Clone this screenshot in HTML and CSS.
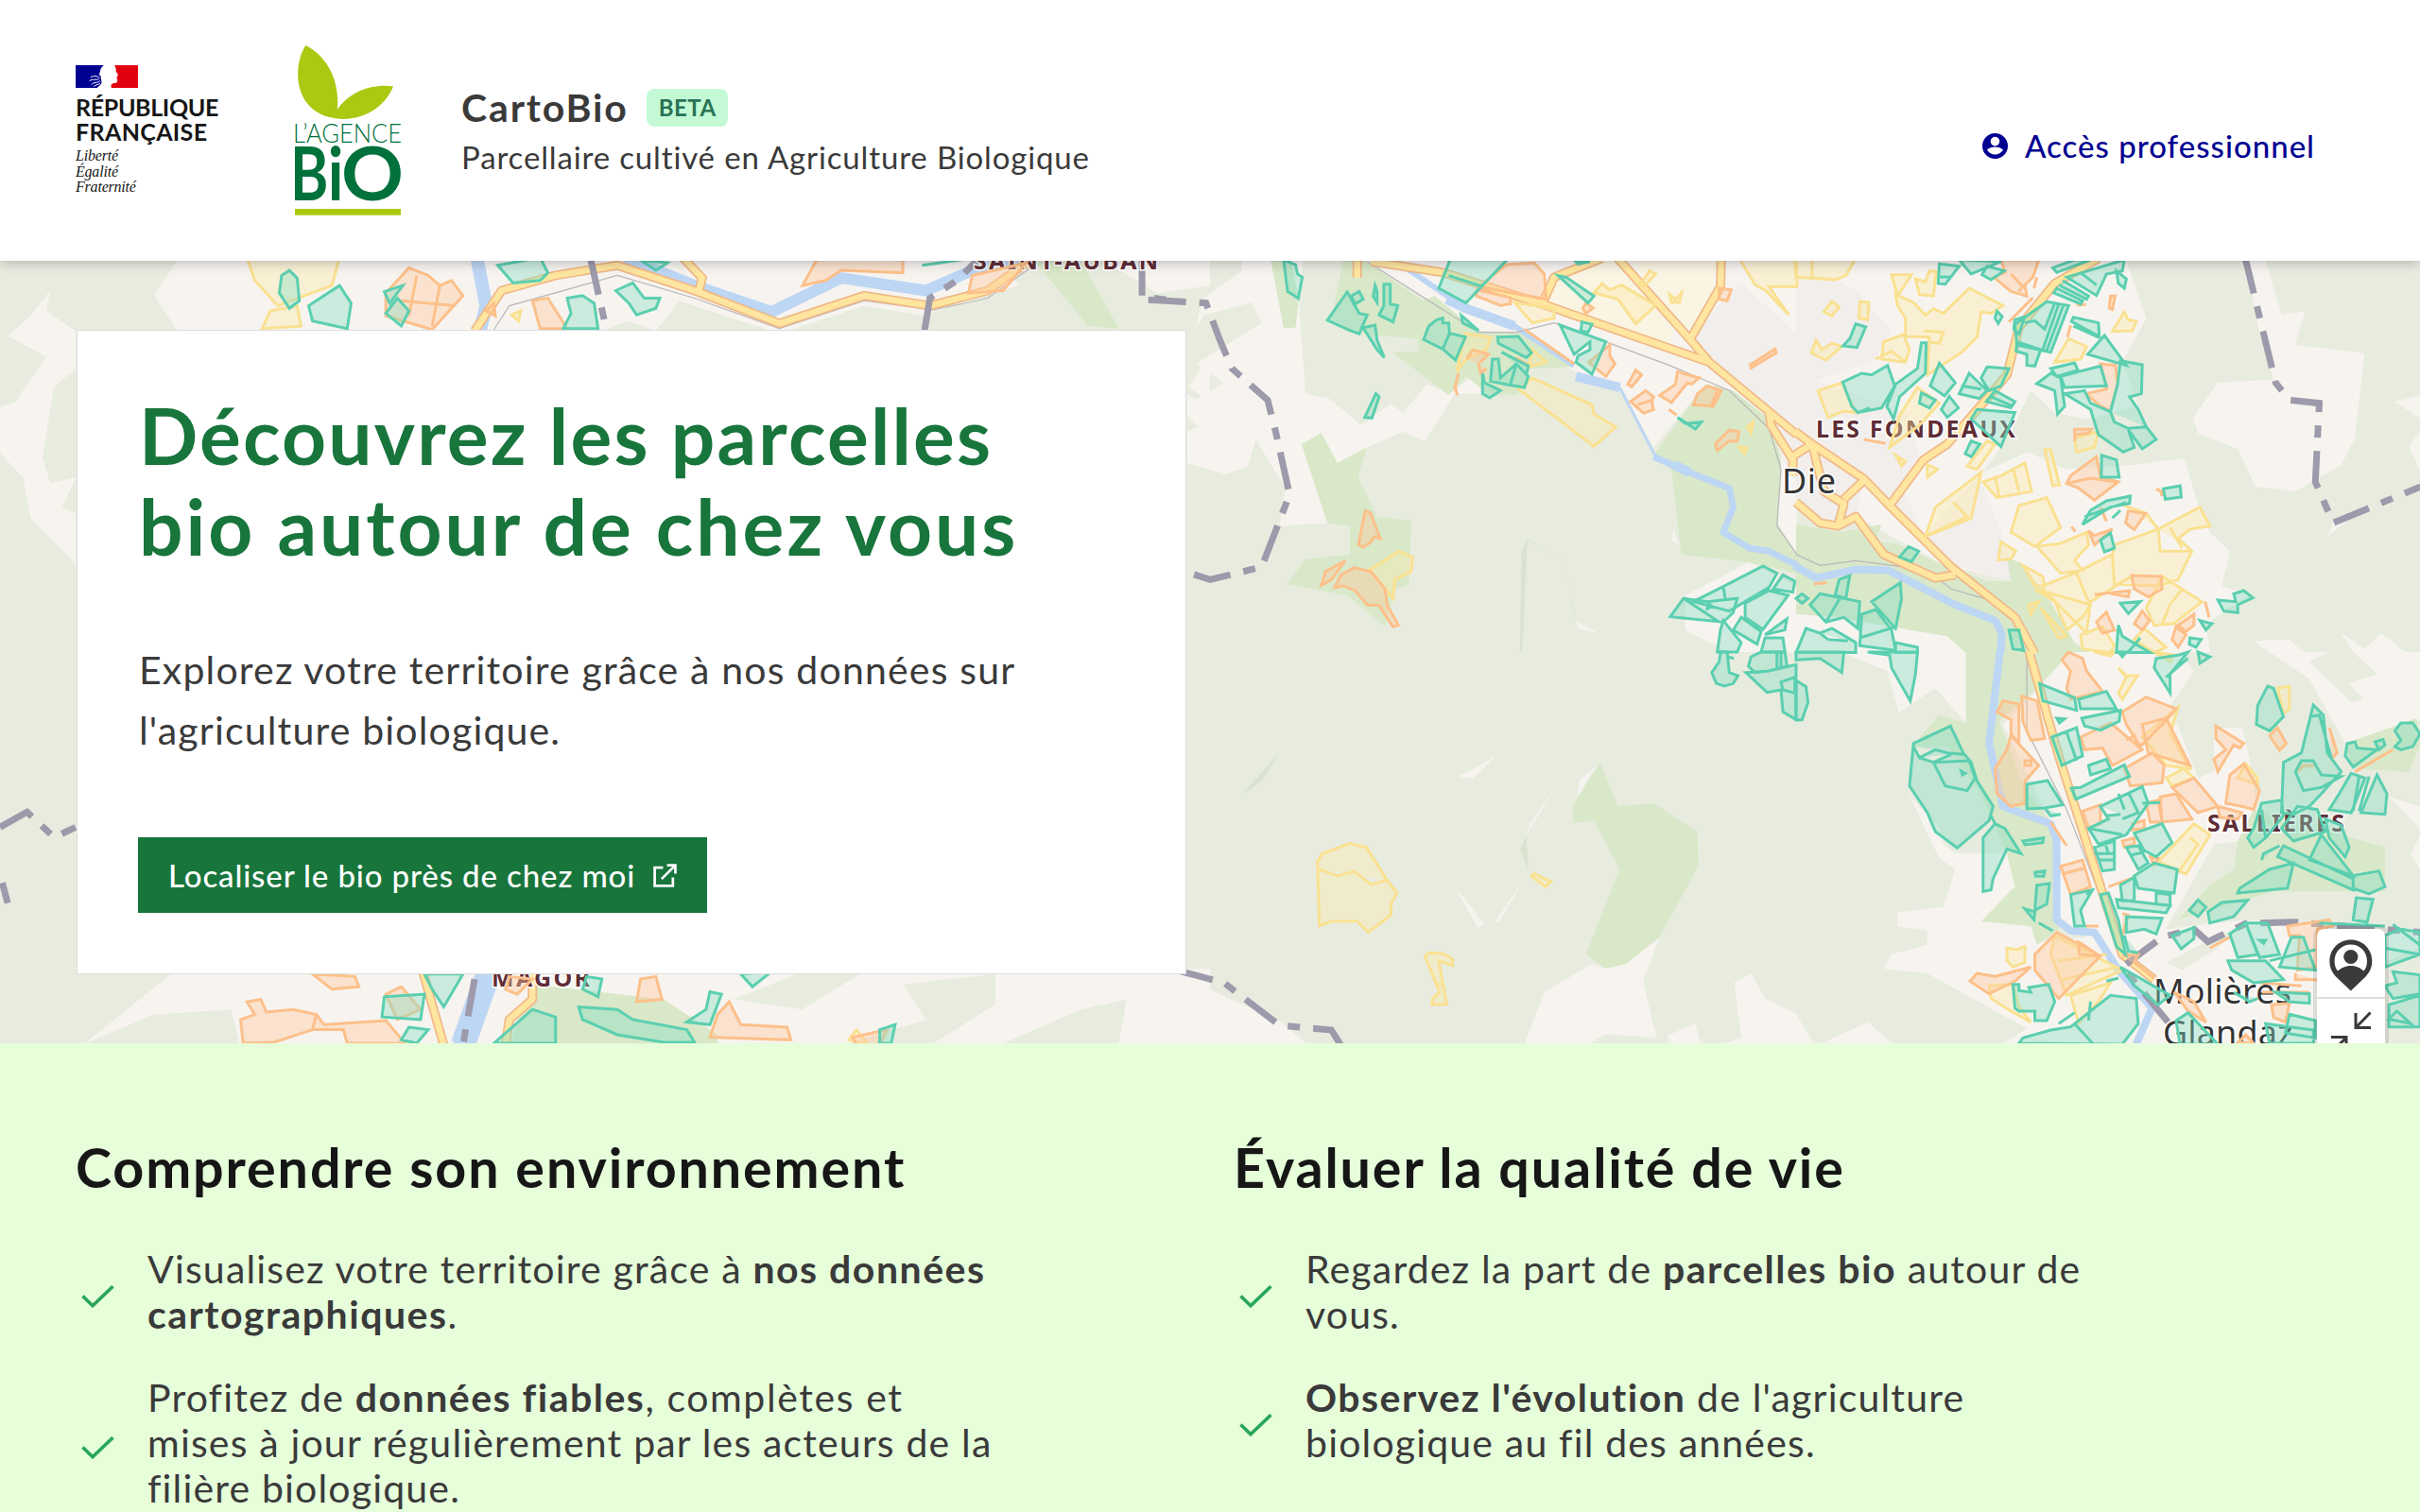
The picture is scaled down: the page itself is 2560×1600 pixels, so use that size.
FILE: index.html
```html
<!DOCTYPE html>
<html lang="fr">
<head>
<meta charset="utf-8">
<title>CartoBio</title>
<link rel="stylesheet" href="styles.css">
</head>
<body>
<header class="header">
  <div class="rf">
    <svg class="rf-flag" viewBox="60 120 198 72" aria-hidden="true">
      <path fill="#000091" d="M60 120H149C143 126 138 132 138 140L134 151L140 154C138 160 144 168 142 178C139 184 133 187 128 192H60Z"/>
      <path fill="#e1000f" d="M183 120H258V192H174C170 184 174 177 183 177C190 178 194 173 192 166L190 160L195 150L188 140C189 132 187 126 183 120Z"/>
      <path fill="none" stroke="#fff" stroke-width="3" d="M108 158C118 152 128 154 136 160M104 170C114 162 124 168 134 164M110 182C118 172 128 178 138 170M118 188C126 180 132 182 138 178"/>
    </svg>
    <p class="rf-name"><span>RÉPUBLIQUE</span><br><span class="rf-wide">FRANÇAISE</span></p>
    <p class="rf-motto">Liberté<br>Égalité<br>Fraternité</p>
  </div>
  <svg class="agence" viewBox="756 54 336 540" role="img" aria-label="L'Agence Bio">
    <path fill="#abc911" d="M790 54C750 115 745 265 885 286C975 298 1045 245 1068 184C1000 175 930 200 890 258C900 180 865 90 790 54Z"/>
    <text class="agence-top" x="750" y="363" textLength="345" lengthAdjust="spacingAndGlyphs">L’AGENCE</text>
    <text class="agence-bio" x="740" y="547" textLength="122" lengthAdjust="spacingAndGlyphs">B</text>
    <text class="agence-bio" x="860" y="547" textLength="50" lengthAdjust="spacingAndGlyphs">i</text>
    <text class="agence-bio" x="903" y="547" textLength="198" lengthAdjust="spacingAndGlyphs">O</text>
    <path fill="#abc911" d="M756 573H1092V593H756Z"/>
  </svg>
  <div class="service">
    <p class="service-title"><span class="name">CartoBio</span><span class="badge">BETA</span></p>
    <p class="service-tag">Parcellaire cultivé en Agriculture Biologique</p>
  </div>
  <a class="login">
    <svg viewBox="0 0 27 27" aria-hidden="true"><path fill="#000091" fill-rule="evenodd" d="M13.5 0a13.5 13.5 0 1 1 0 27a13.5 13.5 0 0 1 0-27ZM13.5 3.8a4.8 4.8 0 1 0 0 9.6a4.8 4.8 0 0 0 0-9.6ZM5 17.5C7 20.8 10 22.6 13.5 22.6S20 20.8 22 17.5C20 15.8 17 14.6 13.5 14.6S7 15.8 5 17.5Z"/></svg>
    <span>Accès professionnel</span>
  </a>
</header>

<section class="hero">
  <svg class="map" viewBox="0 276 2560 828" preserveAspectRatio="none" aria-hidden="true">
    <!-- land cover -->
    <g transform="translate(0 270) scale(.8163 .5357)">
      <path class="land" d="M65 70L40 120 10 160 60 200 20 290 0 300V390L30 440 40 520 98 610V510L80 500 98 440 65 450 55 400 70 260 98 225V150L60 110ZM230 10H1000L1300 10 1320 60 1195 120 1030 150H850L815 130 780 150H230L200 80ZM230 1410L110 1557H1568V1410ZM1430 10H1568V60L1500 75ZM1568 200L1540 260 1568 290Z"/>
      <path class="wood" d="M200 1500L300 1490 310 1557H110ZM1000 1440L950 1470 1040 1490 1120 1415H1040ZM1290 1480L1210 1557H1100L1200 1510 1170 1440 1290 1420ZM1400 1490L1460 1470 1450 1557H1300ZM880 90L1000 150H850ZM1020 150L1120 100 1200 120 1190 150Z"/>
      <path class="grass" d="M1340 10H1400L1450 145 1410 140ZM690 1440L860 1470 930 1540V1557H660Z"/>
    </g>
    <g transform="translate(1240 270) scale(.4209 .3333)">
      <path class="land" d="M175 18H430V80L320 140 335 440 395 455 475 540 550 470 580 500 640 410 700 440 770 370 870 440 710 440 635 590 580 560 490 610 415 660 375 565 325 600 390 850 270 860 285 740 210 585 190 670 135 695 38 660V560L65 545 38 510V440L60 460 130 405 60 345 225 215 200 150 80 190 60 230 75 140 175 50ZM485 18H1570V960L1520 850 1530 640 1480 540 1410 430 1340 410 1210 610 1125 420 1010 370 870 245 770 240ZM1260 870L1275 920 1255 905ZM1450 975L1570 1050V1260H1400L1290 1190 1290 1080ZM1015 1160L1070 1200 1020 1185Z"/>
      <path class="wood" d="M330 18H430V200L390 205 440 245 520 255 615 265V305L555 310 640 410 580 500 550 470 475 540 395 455 335 440 318 140Z"/>
      <path class="town" d="M1430 90L1570 250V720L1530 640 1500 520 1350 350 1300 270 1380 150Z"/>
      <path class="farm" d="M1050 18H1120L1260 240 1250 280 1080 210 940 150 960 70ZM1150 18H1370L1350 150 1300 240Z"/>
      <path class="grass" d="M248 18H300L318 140 310 230 280 232ZM430 18H485L630 145 660 130 770 245 870 245 1010 355 900 360 870 440 800 450 740 385 695 445 555 310 620 305 615 265 520 255 440 245 400 200ZM325 600L375 565 415 660 490 610 467 705 515 830 600 842 595 1045 560 1060 535 1178 440 1080 288 1045 335 965 447 950V860L390 850ZM1340 410L1410 430 1500 520 1530 640V690L1520 850 1570 950V1010L1450 975 1280 950 1255 680 1210 635Z"/>
      <path class="shade" d="M893 900L880 1260H874L878 940ZM893 900L975 965 985 970 900 910ZM990 990L1012 1150 1016 1160 996 1040Z"/>
    </g>
    <g transform="translate(1900 270) scale(.4209 .3333)">
      <path class="land" d="M0 18H830L880 200 820 340 860 480 730 520 650 500 590 430 540 560 470 690 580 625 680 680 850 665 975 645 1010 790 1040 880 1090 940 1070 1050 1140 1080 1030 1170 1040 1260H660L610 1100 560 970 490 1020 430 1000 380 990 150 830 0 780ZM1130 18H1180L1220 190 1280 178 1253 285 1428 312 1405 580 1370 665 1255 750 1155 735 1110 615 1010 565 998 515 1060 405 1200 395 1165 250ZM1505 465L1570 445V520ZM1540 605L1570 560V690ZM1150 1225L1240 1220 1275 1260H1190ZM1370 1200L1430 1250 1470 1200 1530 1260H1400ZM1350 850L1390 840 1335 893Z"/>
      <path class="town" d="M0 60L90 70 150 110 240 240 200 330 50 400 280 500 310 640 270 740 320 890 460 700 540 960V1035L490 1020 390 980 280 850 170 715 0 560ZM0 560L170 715 150 830 105 870 0 780Z"/>
      <path class="grass" d="M0 855L110 880 215 855 200 910 250 915 380 990 430 1010 480 1035 540 1035 530 960 570 980 640 1100 700 1230 740 1262H420L380 1210 200 1190 100 1150 0 1140Z"/>
      <path class="land" d="M0 1140L100 1150 380 1210 425 1262H0Z"/>
    </g>
    <g transform="translate(1240 690) scale(.4209 .3333)">
      <path class="land" d="M0 1020L270 1170 335 1242H0ZM885 1245L935 1080 1055 990 1090 1005 1140 990 1225 905 1183 1045 1217 1225 1090 1212 1045 1245ZM1245 1218L1315 1180 1328 1245H1250ZM1413 1050L1455 1020 1490 1100 1570 1150V1245H1380L1430 1225ZM720 395L815 330 755 402ZM1025 405L1065 362 1018 460ZM965 425L890 580 900 545ZM710 745L785 865 768 875ZM888 715L810 860 822 855Z"/>
      <path class="grass" d="M1075 350L1120 490 1210 480 1320 570 1322 680 1225 905 1140 990 1090 1005 1040 960 1125 690 1060 535 1010 542 1007 490Z"/>
      <path class="shade" d="M890 585L896 692 874 625ZM173 455L270 318 225 410Z"/>
    </g>
    <g transform="translate(1900 690) scale(.4209 .3333)">
      <path class="land" d="M110 0H427V225L350 115 258 192 230 60ZM600 130L690 0H960L1000 60 940 170 1010 400 1050 380V240H1120L1140 340 1160 520 1110 600 1050 610 1000 720 930 880 1130 850 1570 890V1245H850L720 880 660 860 650 600 640 540 520 230ZM285 455L360 560 370 610 400 640 530 640 550 745 465 855 590 870 610 920 770 900 860 1050 890 1140 850 1245H520L580 1195 330 1020 220 1005 240 960 330 930V885L255 870V825L370 810 400 690 360 655ZM1190 0H1340L1395 160 1425 150 1390 100 1460 70 1400 0H1570V215L1380 290 1290 85ZM1490 460L1570 490V580L1545 640 1568 690V560ZM60 1245L180 1175 245 1245ZM0 1150L45 1245H0Z"/>
      <path class="wood" d="M930 985L1060 900 1100 880 1060 940 970 1010ZM1340 0H1400L1460 70 1390 100 1420 150 1395 160 1290 30ZM1480 980L1570 940V1242H1480Z"/>
      <path class="grass" d="M427 0H690L600 120 510 220 570 420 640 540 660 600V880L605 930 590 870 465 855 550 745 530 640 460 440 380 300H290L360 200 427 225ZM1380 290L1560 210 1570 290 1540 380 1400 370ZM1150 500L1480 620V760H1200L960 850 1040 740 1100 690 1110 600Z"/>
    </g>
    <!-- water -->
    <g class="water">
      <g transform="translate(0 270) scale(.8163 .5357)">
        <path class="w14" d="M618 5L630 100 622 150M630 1410L595 1560"/><path class="w24" d="M635 1410L600 1560"/>
        <path class="w12" d="M810 5L900 60 1000 112 1090 45 1200 70 1260 30 1330 5"/>
      </g>
      <g transform="translate(1240 270) scale(.4209 .3333)">
        <path class="w6" d="M570 25L680 120 740 170 860 225 1010 350"/><path class="w10" d="M690 140L740 170 860 225"/>
        <path class="w10" d="M1015 385L1125 420M1260 665L1300 690"/>
        <path class="w4" d="M1125 420L1215 640"/>
        <path class="w7" d="M1210 640L1300 690 1400 740 1410 800 1385 880 1450 930 1500 940 1572 985"/>
      </g>
      <path class="w9" transform="translate(1900 270) scale(.4209 .3333)" d="M-5 985L50 1025 150 998 230 1000 400 1110 500 1160 517 1200 514 1262"/>
      <path class="w9" transform="translate(1900 690) scale(.4209 .3333)" d="M513 -5L485 290 520 490 640 545 655 600V850L690 885 750 890 810 1010 895 1130 855 1245"/>
    </g>
    <!-- railways -->
    <g class="rail">
      <path transform="translate(1240 270) scale(.4209 .3333)" d="M490 20L770 245H865L960 215 1250 350 1400 430 1500 550 1530 680 1520 860 1570 950"/>
      <path transform="translate(1900 270) scale(.4209 .3333)" d="M0 950L60 985 150 970 330 1000 390 1060 500 1100"/>
      <path transform="translate(1900 690) scale(.4209 .3333)" d="M580 0V250L680 500 760 760"/>
      <path transform="translate(0 270) scale(.8163 .5357)" d="M640 147L660 100 800 40 900 85 1010 145 1120 90 1210 108 1280 85 1340 20"/>
    </g>
    <!-- roads: casing, then surface -->
    <g class="casing">
      <path id="r1" transform="translate(1240 270) scale(.4209 .3333)" d="M500 20L680 55 930 155 1350 340 1570 570M1120 10L1300 265 1350 340M1380 10L1378 100 1305 260M930 155L960 70 1080 10M465 10V72M1500 500L1505 540 1560 650V700"/>
      <path id="r2" transform="translate(1900 270) scale(.4209 .3333)" d="M-2 560L40 600 170 710 235 795 390 990 420 1020 550 1150 600 1265M235 795L320 650 380 600 490 440 530 380 560 230 650 90 760 10M40 600L70 750 120 790 105 860 60 850 0 785M170 715L120 775M105 860L150 830 220 950 350 1025 400 1015M40 600L-10 640"/>
      <path id="r3" transform="translate(1900 690) scale(.4209 .3333)" d="M585 -5L660 330 820 960 900 1040"/>
      <path id="r4" transform="translate(0 270) scale(.8163 .5357)" d="M615 150L650 70 720 40 800 20 900 70 1010 135 1120 80 1205 100 1280 70 1340 5M905 75L910 45 885 5M546 1405L575 1560M690 1405V1470L660 1510 655 1560"/>
    </g>
    <g class="road"><use href="#r1"/><use href="#r2"/><use href="#r3"/><use href="#r4"/></g>
    <!-- municipal boundaries -->
    <g class="border">
      <path transform="translate(1240 270) scale(.4209 .3333)" d="M-60 142L85 152 120 270 150 360 240 460 260 560 295 760 225 990 95 1030 20 1000"/>
      <path transform="translate(1900 270) scale(.4209 .3333)" d="M1128 5L1205 405 1240 460 1315 470 1305 720 1350 850 1570 735"/>
      <path transform="translate(1900 690) scale(.4209 .3333)" d="M935 1175L820 1000 920 905 1000 880 1035 920 1130 862 1250 857 1570 890"/>
      <path transform="translate(1240 690) scale(.4209 .3333)" d="M10 1010L130 1050 270 1185 400 1200 425 1250"/>
      <path transform="translate(0 270) scale(.8163 .5357)" d="M765 5L787 155M1198 150L1205 85 1240 50 1270 5M1480 5V82L1530 92M0 1130L35 1100 70 1150 98 1130M3 1240L10 1280M615 1430L600 1560"/>
    </g>
    <!-- place names -->
    <g class="hamlet">
      <text x="1030" y="285" textLength="195">SAINT-AUBAN</text>
      <text x="1921" y="463" textLength="211">LES FONDEAUX</text>
      <text x="2335" y="879.5" textLength="145">SALLIÈRES</text>
      <text x="520" y="1043.5" textLength="104">MAGOR</text>
    </g>
    <g class="village">
      <text x="1885" y="522" textLength="57">Die</text>
      <text x="2278" y="1062" textLength="146">Molières</text>
      <text x="2288" y="1106" textLength="138">Glandaz</text>
    </g>
    <!-- parcels: first year, second year, certified -->
    <g class="yellow">
      <path transform="translate(0 270) scale(.8163 .5357)" d="M320 5H440L430 60 360 100 330 50ZM350 110L385 100 390 140 340 145ZM663 118L675 110 672 130ZM1100 1550L1110 1530 1125 1560Z"/>
      <path transform="translate(1240 270) scale(.4209 .3333)" d="M735 250L800 260 790 300 740 330 715 370ZM905 390L1055 475 1060 505 1115 545 1060 607 870 425ZM905 300L940 340 895 355ZM570 940L605 960 600 1005 560 1030 555 1090 495 1000ZM860 150L960 170V200L905 215ZM1080 90L1100 110 1130 95 1215 160 1165 218 1120 140 1060 120ZM1425 10H1570V100H1500L1550 190 1490 110 1465 95ZM1200 50L1215 60 1185 100 1175 95ZM1250 125L1265 140 1280 120 1275 150 1255 150ZM1445 545L1460 530 1455 565ZM1425 610L1445 612 1438 630Z"/>
      <path transform="translate(1240 690) scale(.4209 .3333)" d="M365 665L378 640 445 608 488 620 540 724 565 765 550 800V835L493 890 465 855H400L370 868ZM365 688L415 710 458 697 500 738 540 724M635 965L645 955 680 957 705 975V995L670 980 690 1118 652 1120 655 1100 672 1080ZM668 1055L683 1050M908 703L952 728 938 745 903 712Z"/>
      <path transform="translate(1900 270) scale(.4209 .3333)" d="M-5 10H150L125 65 100 78 0 70ZM40 18V68M240 62H290L255 130ZM300 75L325 85 335 50 352 52 345 130 310 125ZM250 125L295 150 325 190 345 170 370 185 435 105 520 160 490 185 465 180 455 260 420 305 330 380 335 260 275 258V200L255 160ZM320 240L370 245 360 280 335 275M90 147L108 165 90 193 70 180ZM160 148L183 150 180 205 158 200ZM50 270L65 300 90 280 115 290 75 333 38 310ZM270 252L285 300 275 340 215 330 220 275ZM200 330L240 305 275 340M55 430L115 405 150 500 120 495 80 515ZM305 420L360 470 310 540 235 610 260 510ZM650 340L685 265 730 290 715 330ZM825 180L835 205 855 210 845 240 795 242ZM700 580L760 560 750 610 705 625ZM625 618H640L662 730 645 732ZM470 720L515 700 575 660 592 750 505 770ZM500 700L510 765M545 675L560 750M465 690L440 835 325 893 350 800ZM395 785L430 830 325 893M560 795L630 770 665 865 600 925 540 880ZM665 915L730 880 735 920 700 970 720 1000 665 1010 605 925ZM515 910L552 940 540 965 508 968ZM800 920L910 870 1015 800 1040 860 990 870 960 900 995 940 960 1030 910 1050 800 1045 795 950ZM910 870L915 940 995 940M940 865L970 930M815 790L880 820 910 870M620 1050L700 1010 795 950 800 1050 850 1015 740 1100 730 1200 620 1060ZM705 1010L735 1100M920 1020L970 1060 1020 1100 950 1170 900 1175 880 1120ZM970 1060L940 1110 920 1170M600 1060L740 1110 720 1150 680 1190 650 1100ZM715 1205L770 1180 800 1240 790 1262 720 1250ZM875 1185L930 1245 900 1262 850 1220ZM570 985L620 1020 625 1050 600 1050ZM430 670L480 590 500 600 455 680ZM250 635L275 655 265 670ZM330 665L355 680 330 705ZM585 1110L610 1100 590 1140ZM615 1120L680 1210 660 1215Z"/>
      <path transform="translate(1900 690) scale(.4209 .3333)" d="M960 175L940 260 990 370 930 360 870 270ZM1210 115L1240 108V180L1225 195ZM810 50L830 75 858 75 820 150 810 130 830 80ZM1000 545L1040 580 980 705 910 665ZM990 590L1010 610 960 700M1130 355L1160 400V420L1110 400ZM930 400L975 370 1000 400 945 425ZM530 940L555 945 575 935V985L545 1000 530 980ZM485 1060L545 1055 560 1125 590 1175 540 1140 490 1100ZM690 1090L790 1050 760 1110 710 1180ZM650 900L820 1010 680 1090 640 960ZM670 1040L810 1000M660 980L780 960M750 0L800 0 790 12ZM900 0L950 10 940 30Z"/>
    </g>
    <g class="orange">
      <path transform="translate(0 270) scale(.8163 .5357)" d="M500 75L530 25 555 40 570 60 585 50 600 80 560 147 500 120ZM540 40L530 120M570 60L560 140M520 90L590 100M630 110L640 95 642 120ZM690 90L710 85 735 145H700ZM1040 60L1060 5H1170V35L1090 30 1070 50ZM1260 40L1330 15 1300 70 1255 75ZM320 1475L338 1470 345 1495 380 1490 410 1500 405 1530 355 1555 315 1557 312 1510 330 1500ZM410 1500L420 1520 500 1512 525 1557H450L445 1530 405 1530M405 1420L460 1425 465 1445 430 1450ZM500 1460L520 1445 545 1490 515 1510ZM930 1500L945 1475 960 1520 1020 1525 1025 1550 920 1545ZM830 1430L850 1425 858 1470 825 1475ZM660 1425L690 1430 670 1460 655 1450ZM1110 1560L1105 1545 1150 1530 1140 1560Z"/>
      <path transform="translate(1240 270) scale(.4209 .3333)" d="M485 812L498 818 523 900 508 895 500 910 480 927 468 920ZM435 970L400 1030 375 1048 385 1005ZM458 992L500 1005 535 1060 540 1110 568 1175 555 1180 520 1112 490 1110 460 1065 430 1050 408 1055 425 1015ZM840 30L910 25 935 60 940 140 770 100ZM765 110L850 135V155L825 160 765 130ZM885 235L1010 345M1100 285V320L1113 345 1090 385 1047 340ZM1165 365L1180 380 1155 418 1145 410ZM1190 430L1210 450 1205 465 1210 490 1185 502 1152 465ZM1170 475L1205 460M1270 370L1325 390 1305 410 1295 405 1255 468 1225 445 1265 410ZM1345 415L1380 430 1360 480 1310 475 1320 440ZM1370 430L1355 475M1400 555L1425 560 1420 590 1400 590 1370 620 1365 600ZM1515 298L1518 310 1455 358 1453 348ZM740 330L755 300 795 315 770 345 775 375 790 360M720 375L710 420 717 445M1040 152L1058 168 1040 185 1032 170ZM1248 490L1268 508M1375 105L1405 110 1395 145 1375 140ZM862 325L895 350"/>
      <path transform="translate(1900 270) scale(.4209 .3333)" d="M515 15H610L595 70 575 95 580 130 540 115 497 70 525 55ZM540 60L570 100 560 115M790 130L802 130 795 172 787 168ZM765 345L803 350 808 410 790 495 760 475 730 440 780 425ZM535 212L595 135M690 222L682 260M605 70L598 105M705 158L728 157M755 640L765 705 810 720 750 778 710 740 680 725 690 700ZM680 725L740 708 810 722M835 812L878 820 850 872 828 850ZM735 875L750 920 795 870 750 890ZM765 800L780 845M692 862L702 878M843 1017L918 1020 920 1060 885 1085 850 1060ZM750 1078L838 1065 835 1085 790 1075M780 1133L800 1190 770 1200 755 1165ZM870 1130L888 1160 870 1190 850 1170ZM1000 1140V1175L980 1195 960 1175ZM955 1180L980 1205 960 1245 945 1220ZM1028 1100L1038 1150M170 585L225 598M700 553H742L735 565 702 570 700 590ZM45 1043L78 1040M905 742L920 752 918 765"/>
      <path transform="translate(1900 690) scale(.4209 .3333)" d="M685 0L720 20 730 60 770 125 690 150 680 115 690 60 668 25ZM520 155L560 165V290L540 260V215L505 190ZM567 140L605 155 625 275 590 280 570 220ZM540 265L610 360 575 410V480L540 490 505 450 500 370 530 310ZM575 345L590 345V360L575 360ZM820 190L880 143 955 180 920 230 865 300 830 230ZM715 270L790 225 870 310 795 360 770 305 725 310ZM830 280L850 265 860 300M870 230L930 210 990 360 885 320ZM825 370L895 320 925 360 920 415 840 425ZM945 430L1000 400 1060 490 1010 510ZM1055 235L1125 290 1115 305 1100 295 1060 380 1050 340 1080 310 1055 275ZM1125 355L1165 440 1150 500 1120 490 1080 480 1090 390ZM1060 490L1120 510 1110 530 1065 525ZM915 460L955 450 995 530 920 540ZM720 505L765 485V545L735 560ZM665 680L720 660 740 745 690 770ZM668 705L728 685M1210 240L1232 290 1215 312 1190 265ZM655 890L765 965 660 1100 600 1010V960ZM710 920L765 965 712 960ZM455 1020L500 1030 590 1000 550 1045 485 1085 437 1045ZM1235 870L1340 850 1350 870 1310 880V1000L1260 1010 1265 900 1240 900ZM880 480L910 470 920 540 890 540ZM845 545L875 535 875 560 845 565ZM1195 1120L1240 1115 1230 1175 1200 1160ZM950 1080L1000 1110 1030 1175 985 1140ZM1110 1240L1130 1215 1150 1242ZM1340 240L1360 320 1345 340M1405 380L1500 310M640 540L680 615M890 650L910 655 900 675ZM785 745L850 715M728 870H760M1040 940L1090 905M820 830L835 835 820 900M820 965L860 960 850 985 900 1035M820 600L850 590V610L825 620ZM1260 380L1275 360 1310 360M1165 1050L1270 1060M1170 1080L1290 1080M1255 1020V1040H1310"/>
    </g>
    <g class="teal">
      <path transform="translate(0 270) scale(.8163 .5357)" d="M365 40L375 30 385 45 388 90 375 105 362 75ZM400 100L440 60 455 95 450 145 405 130ZM498 72L505 95 522 60ZM515 85L530 110 520 140 500 115ZM645 20L700 5 710 35 700 50 665 55ZM735 85L755 80 770 95 775 145H730L740 115ZM798 70L820 55 835 85 855 85 850 105 825 118 815 95ZM830 10L865 15 850 30ZM1195 20L1250 8M498 1465L550 1460 545 1510 495 1505ZM530 1525L555 1530 540 1557 520 1550ZM550 1420H600L575 1485 560 1450ZM750 1485L800 1490 820 1510 890 1530 900 1555H860L800 1540 755 1510ZM720 1505V1557H640L690 1490ZM920 1455L935 1460 920 1520 890 1515 915 1490ZM960 1420L1000 1415 975 1445ZM1140 1530L1160 1520 1155 1557H1140ZM760 1425L780 1430 775 1465 755 1450Z"/>
      <path transform="translate(1240 270) scale(.4209 .3333)" d="M280 15L310 30 315 60 327 70 317 137 290 115ZM440 117L470 185 490 190 470 250 440 235 390 207ZM450 130L470 115 480 140 460 155ZM510 97L515 115 515 150 505 130ZM532 92H548V155L567 160 555 212 520 190 532 160ZM480 230L510 222 515 270 533 325 515 300ZM665 205L680 200 680 215 695 215 697 250 680 298 632 268 645 225ZM697 248L737 260 712 333 680 298ZM727 192L770 240 730 215ZM512 440L520 450 502 517 484 515ZM818 260L870 258 903 310 890 325 820 280ZM805 330H820L825 390 865 345 895 385 885 420 845 412 800 400ZM865 345L850 410M828 308L895 352 890 380M780 375L785 405 825 430 798 453 780 440ZM700 10H845L738 152 670 105ZM695 65L780 100M970 65L990 70 1060 130 1045 152ZM975 222L1090 275 1055 378 1015 340 1020 320 1050 300V275L1010 315ZM1030 212L1055 220 1045 245 1027 240ZM1270 515L1290 535 1330 530 1315 552ZM1010 15L1050 20 1020 28ZM1485 987L1520 1010 1500 1055 1400 1130 1310 1100 1385 1052ZM1385 1052L1390 1090M1285 1090L1345 1100 1420 1090 1410 1135 1385 1165 1252 1148ZM1285 1090L1375 1165M1500 1065L1548 1080 1485 1188 1440 1150V1105ZM1535 1015L1565 1035 1560 1070 1510 1060ZM1430 1150L1480 1195 1470 1235 1410 1190ZM1545 1155L1540 1190 1490 1205ZM1385 1160L1430 1230 1420 1260H1370L1378 1190ZM1490 1215H1535L1540 1260H1480ZM1347 1105L1357 1115 1345 1122Z"/>
      <path transform="translate(1240 690) scale(.4209 .3333)" d="M1378 0H1395L1400 65 1422 75 1410 100 1388 108 1368 100 1356 65 1375 30ZM1395 15L1412 20M1455 15L1480 0H1540L1545 45 1500 60 1465 65 1448 45ZM1520 0V50M1530 0V48M1442 65L1500 60 1568 40V215L1535 190 1530 120 1495 128ZM1530 95L1565 80V130L1535 120Z"/>
      <path transform="translate(1900 270) scale(.4209 .3333)" d="M360 28L410 35 375 92 357 90ZM360 68L388 70M410 15L515 20 440 60ZM480 35L523 50 490 78 467 62ZM645 40L700 15 740 15 655 55ZM680 70L825 15 820 50 780 60 755 128ZM715 55L755 95M805 50L830 75 825 105 810 90ZM655 105L720 145 715 155 648 120ZM670 80L735 130 730 140 660 95M630 148L685 160 640 308 555 285 550 220 605 170ZM660 155L620 300M672 158L630 303M650 152L625 235 600 208 575 215M555 275L615 300 600 352 580 350V315L553 305ZM697 197L760 215 762 258 692 210ZM697 225L762 262M775 255L830 350 733 315ZM640 360L700 342 708 365 655 385ZM665 385L765 352 780 415 675 420ZM605 408L640 375 665 390 675 480 657 505 650 430ZM815 335L870 348 868 440 838 450 860 490 880 545 905 585 870 615 835 555 850 610 822 625 760 570 740 490 675 440 725 430 740 470 790 497 808 410ZM790 497L800 530 835 550 880 545M360 343L400 405 373 447 337 415ZM435 375L480 430 460 455 410 440ZM415 415L465 425M480 355L535 360 515 415 485 430 465 390ZM117 403L165 375 190 380 230 350 248 415 215 485 155 500 140 480ZM155 500L185 485M315 278H327L325 375 260 450 245 520 228 480 250 410 305 360ZM150 218L175 228 153 293 118 288 135 265ZM315 437L350 460 335 485 310 470ZM385 448L408 485 380 515 365 490ZM500 430L550 465 540 485 478 465ZM490 450L545 480M455 490L550 500 515 608 440 520ZM440 590L462 600 440 640 425 630ZM505 178L518 195 508 217 500 200ZM550 205L575 195 560 250 547 235ZM768 635L805 650 812 705 767 705ZM923 742L965 732 968 768 928 775ZM780 780L840 765 838 788 790 800 720 855 740 810ZM725 830L830 785M795 835L815 810M790 882L800 930 775 942 765 905ZM283 925L308 940 290 973 260 958ZM108 1030L135 1017 125 1090 98 1080ZM262 1040L265 1090 250 1185 190 1100ZM60 1075L160 1100 155 1185 120 1150 75 1165 35 1110ZM110 1090L75 1165M0 1090L15 1075 30 1090 15 1105ZM165 1140L200 1125 240 1190 250 1255 160 1240ZM160 1215L250 1180M25 1185L60 1200 90 1185 150 1230V1262H0ZM60 1200L80 1220 130 1225M250 1230L305 1245V1262H250ZM535 1190L560 1190 572 1255 545 1250ZM815 1105L865 1100 835 1138ZM1060 1095L1105 1100 1100 1075 1125 1065 1148 1088 1110 1110V1135L1075 1130ZM1015 1160L1045 1170 1030 1190ZM990 1215L1018 1220 1005 1245 988 1235ZM810 1175L820 1210 890 1262H805ZM865 1215L835 1260"/>
      <path transform="translate(1900 690) scale(.4209 .3333)" d="M0 0H120L115 65 60 20 0 25ZM0 90L25 110 30 160 15 215H0ZM180 0H305L300 70 287 155 240 50 235 10ZM295 290L388 235 420 320 440 350 455 410 495 490 485 535 405 622 350 570 330 510 285 425ZM295 300L310 335 350 310 380 320 420 325M310 335L345 350 390 325M345 350L435 345 450 400 430 440 375 425ZM415 378L425 385 418 390ZM500 545L525 560 565 640 530 625 495 720 490 755 470 760V590ZM500 545L490 520M612 100L700 145 705 185 620 155ZM710 150L780 125 805 180 715 180ZM718 210L815 185 812 220 765 248 725 235ZM655 210L675 212 662 225ZM643 270L705 240 720 330 668 360ZM680 255L705 345M735 360L780 340 790 370 740 390ZM692 432L715 430 825 358 838 395 703 467ZM580 420L632 408 670 485 625 495 580 498ZM625 495L640 520 665 515M765 490L870 427 885 480 830 580 760 610 735 560 785 530ZM765 490L780 520 815 515M810 450L825 500M835 445L860 510 820 530M870 480L915 478M735 560L820 580M750 620L800 600 800 690 770 695ZM750 640H800M760 660H800M775 600L785 640M850 575L920 545 945 605 905 650 875 630ZM920 545L945 605M830 620L860 615 885 670 860 690ZM840 645L875 635M850 710L900 670 958 690 950 765 860 750ZM815 740L850 715V790H820ZM905 765L940 770 940 805 905 800ZM805 785L940 805 930 828 810 812ZM765 770L785 765 810 850 828 960 805 935ZM830 840L920 845 905 895 875 880 830 890ZM825 900L835 950 860 955M690 770L745 755 715 820 725 870 700 870ZM730 770L740 760M605 740L637 735 630 800 600 820ZM575 815L600 825 598 850ZM600 700L625 695 622 712 602 712ZM570 600L622 590 620 605 575 612ZM610 860L645 885M1185 108L1200 115 1225 205 1190 250 1157 230 1160 170ZM1300 168L1325 200 1335 320 1370 380 1320 450 1290 490 1250 515 1220 510 1225 350 1270 320ZM1295 205L1315 200 1345 335M1255 380L1270 345 1300 345 1320 390 1370 395 1320 430 1275 440ZM1385 290L1405 285 1410 305 1460 310 1400 365 1380 330ZM1455 285L1475 278 1480 295 1465 310ZM1505 250L1520 225 1550 225 1568 260 1550 300 1520 310 1505 300 1520 280ZM1395 385L1430 400 1395 510 1340 500 1365 450ZM1415 395L1400 505M1440 395L1415 505M1460 390L1485 450 1480 515 1420 510ZM1170 480L1220 470 1225 520 1180 590 1150 620 1135 590 1150 560ZM1220 560L1260 490 1310 500 1330 570 1250 600ZM1180 590L1170 500M1210 650L1225 615 1400 720V755ZM1250 670L1235 750 1110 765 1115 750 1190 690ZM1170 660L1175 640 1215 615M1400 710L1465 695 1480 745 1440 768 1400 750ZM1320 580L1400 710 1290 660ZM1330 530L1370 550 1390 620 1380 650 1340 590ZM1010 787L1030 810 1010 840 988 820ZM1035 825L1070 795 1135 788 1100 840 1040 860ZM1408 780L1450 785 1435 858 1400 850ZM945 900L1000 875V910L968 942ZM1090 895L1130 860 1160 960 1110 970ZM1130 860H1185L1215 960 1165 970ZM1165 915L1180 915 1175 925ZM1085 980L1180 980 1225 1040 1150 1050 1095 1010ZM1190 980L1305 945M1245 905H1275L1305 1010 1215 1000ZM1480 900L1520 880 1568 890V960L1480 1000ZM1500 865L1568 930M1480 940L1568 960M1480 1060L1510 1050 1500 1015 1568 1025V1085L1500 1100ZM1490 1120L1568 1090V1190L1490 1190ZM1490 1165L1510 1140 1545 1180ZM560 1242L570 1225 640 1200 690 1190 790 1090 855 1100 860 1180 820 1245ZM740 1110L735 1170M700 1180L745 1242M660 1180L700 1145M545 1055L560 1055V1075L590 1080 585 1065 635 1055 650 1110 630 1170H600V1140H560L550 1130ZM815 1000L940 1090 910 1120 850 1060ZM780 1045L810 1035M1240 1150L1305 1170V1225L1230 1210ZM1205 1080L1290 1085V1115L1240 1110ZM1100 1080L1140 1110 1160 1100M955 1170L985 1145 1060 1245H965ZM1180 1180L1300 1200V1242H1190ZM905 20L960 10 985 0 940 70V130L900 50ZM930 80L985 20M1010 0L1040 15 1015 35ZM810 0L820 15 830 0ZM1315 860L1480 870"/>
    </g>
  </svg>

  <div class="controls">
    <span class="control">
      <svg viewBox="0 0 72 73" aria-hidden="true"><circle cx="35.8" cy="29.5" r="7.6" fill="#3a3a3a"/><path fill="#3a3a3a" fill-rule="evenodd" d="M35.8 11.5C48.5 11.5 58.3 21.5 58.3 34C58.3 41 55.5 46 51.5 50.5L35.8 65.5L20 50.5C16 46 13.4 41 13.4 34C13.4 21.5 23.2 11.5 35.8 11.5ZM35.8 16.5C26 16.5 18.6 24 18.6 34C18.6 38 19.6 41.5 22 44.5C25 41.5 30 39 35.8 39S46.5 41.5 49.5 44.5C52 41.5 53 38 53 34C53 24 45.5 16.5 35.8 16.5Z"/></svg>
    </span>
    <span class="control">
      <svg viewBox="0 0 72 73" fill="none" stroke="#3a3a3a" stroke-width="3" aria-hidden="true"><path d="M41 15V30.500H57M41.500 30L56.500 14.500M15 40.500H31V57M31 41L16 56"/></svg>
    </span>
  </div>

  <div class="card">
    <h1><span>Découvrez les parcelles</span><br><span class="h1-wide">bio autour de chez vous</span></h1>
    <p class="lead">Explorez votre territoire grâce à nos données sur<br>l'agriculture biologique.</p>
    <a class="cta"><span>Localiser le bio près de chez moi</span>
      <svg viewBox="0 0 24 24" fill="none" stroke="#fff" stroke-width="2.600" aria-hidden="true"><path d="M10 4H1.500V22.500H20V14M8.500 15.500L22 2M14 1.500H22.500V10"/></svg>
    </a>
  </div>
</section>

<section class="features">
  <div class="feature">
    <h2>Comprendre son environnement</h2>
    <ul>
      <li><svg class="check" viewBox="0 0 35 24"><path d="M1.500 11.500L12 21.700L33.500 1.200"/></svg><p>Visualisez votre territoire grâce à <b>nos données<br>cartographiques</b>.</p></li>
      <li><svg class="check" viewBox="0 0 35 24"><path d="M1.500 11.500L12 21.700L33.500 1.200"/></svg><p>Profitez de <b>données fiables</b><span class="loose">, complètes et</span><br>mises à jour régulièrement par les acteurs de la<br>filière biologique.</p></li>
    </ul>
  </div>
  <div class="feature">
    <h2>Évaluer la qualité de vie</h2>
    <ul>
      <li><svg class="check" viewBox="0 0 35 24"><path d="M1.500 11.500L12 21.700L33.500 1.200"/></svg><p>Regardez la part de <b>parcelles bio</b> autour de<br>vous.</p></li>
      <li><svg class="check" viewBox="0 0 35 24"><path d="M1.500 11.500L12 21.700L33.500 1.200"/></svg><p><b>Observez l'évolution</b> de l'agriculture<br>biologique au fil des années.</p></li>
    </ul>
  </div>
</section>
</body>
</html>
```
FILE: styles.css
```css
* { box-sizing: border-box; }
html, body { height: 1600px; overflow: hidden; }
body { margin: 0; font-family: Lato, sans-serif; font-size: 41px; line-height: 48px; font-variant-ligatures: none; color: #3a3a3a; background: #fff; display: flex; flex-direction: column; }
h1, h2, p, ul { margin: 0; padding: 0; font-weight: inherit; }
ul { list-style: none; }

.header { position: relative; z-index: 1; flex: none; height: 276px; padding: 0 111px 0 80px; display: flex; align-items: center; background: #fff; box-shadow: 0 2px 12px rgba(0, 0, 18, .25); }
.rf { width: 232px; color: #161616; }
.rf-flag { display: block; width: 66px; height: 24px; }
.rf-name { margin-top: 7px; font-size: 25px; line-height: 26px; letter-spacing: -.35px; font-weight: 700; white-space: nowrap; }
.rf-wide { letter-spacing: .35px; }
.rf-motto { margin-top: 5px; font: italic 16px/16.5px "Liberation Serif", serif; letter-spacing: -.2px; }
.agence { width: 112px; height: 180px; }
.agence-top { font: 300 82px Lato, sans-serif; fill: #00713b; }
.agence-bio { font: 700 236px Lato, sans-serif; fill: #00713b; }
.service { margin: 3px 0 0 64px; }
.service-title { display: flex; align-items: center; gap: 19px; font-weight: 700; }
.name { letter-spacing: 1.85px; }
.badge { height: 40px; padding: 0 12px 0 13px; border-radius: 8px; background: #c3fad5; color: #297254; font-size: 24px; line-height: 40px; letter-spacing: .5px; }
.service-tag { margin-top: 4px; font-size: 33px; letter-spacing: .85px; }
.login { margin: 32px 0 0 auto; display: flex; align-items: center; gap: 18px; font-size: 33px; font-weight: 500; letter-spacing: 1px; color: #000091; }
.login svg { width: 27px; height: 27px; }

.hero { position: relative; flex: none; height: 828px; padding: 73px 0 0 81px; overflow: hidden; background: #e8ecdf; }
.map { position: absolute; inset: 0; width: 2560px; height: 828px; }
.map path { vector-effect: non-scaling-stroke; }
.land { fill: #f7f4f0; }
.wood { fill: #e8ecdf; }
.grass { fill: #d8e8c8; }
.town { fill: #f2eeeb; }
.farm { fill: #faf4e2; }
.shade { fill: #dbe3d0; }
.water { fill: none; stroke: #bdd6f4; stroke-linejoin: round; }
.w4 { stroke-width: 3px; }
.w6 { stroke-width: 6px; }
.w7 { stroke-width: 7px; }
.w9 { stroke-width: 8px; }
.w10 { stroke-width: 10px; }
.w12 { stroke-width: 12px; }
.w14 { stroke-width: 14px; }
.w24 { stroke-width: 26px; }
.rail { fill: none; stroke: #b9b6b8; stroke-width: 1.2px; }
.casing { fill: none; stroke: #f0b988; stroke-width: 10px; stroke-linejoin: round; }
.road { fill: none; stroke: #ffe6a0; stroke-width: 6.5px; stroke-linejoin: round; }
.border { fill: none; stroke: #9d9aab; stroke-width: 7px; stroke-dasharray: 40 14 13 14; }
.hamlet { font: 700 25px "Noto Sans", sans-serif; fill: #5f2d35; stroke: #fff; stroke-width: 3px; paint-order: stroke; }
.village { font: 400 36px "Noto Sans", sans-serif; fill: #333; stroke: #fff; stroke-width: 3px; paint-order: stroke; }
.yellow { fill: #fcebaa66; stroke: #fae191; stroke-width: 3px; }
.orange { fill: #ffc89a66; stroke: #fdc08a; stroke-width: 3px; }
.teal { fill: #86dec266; stroke: #5bcfb0; stroke-width: 3px; }

.controls { position: absolute; left: 2451px; top: 707px; width: 72px; border-radius: 8px 8px 0 0; background: #fff; box-shadow: 0 0 0 4px rgba(0, 0, 0, .1); }
.control { display: block; height: 74px; border-bottom: 2px solid #ddd; }
.control svg { display: block; width: 72px; height: 73px; }

.card { position: relative; width: 1174px; height: 682px; padding: 62px 65px 0 64px; background: #fff; border: 1px solid #ddd; }
h1 { padding-left: 1px; font-size: 82px; line-height: 96px; letter-spacing: 2.2px; font-weight: 700; color: #18753c; white-space: nowrap; }
.h1-wide { letter-spacing: 3px; }
.lead { margin-top: 73px; padding-left: 1px; line-height: 64px; letter-spacing: 1.17px; white-space: nowrap; }
.cta { margin-top: 81px; width: 602px; height: 80px; padding: 0 32px; display: flex; align-items: center; justify-content: space-between; background: #18753c; color: #fff; font-size: 33px; letter-spacing: .87px; font-weight: 500; white-space: nowrap; }
.cta svg { width: 25px; height: 25px; }

.features { flex: 1; padding: 99px 80px 0; display: grid; grid-template-columns: 1225px 1fr; background: #e6feda; }
h2 { font-size: 57.4px; line-height: 64px; letter-spacing: 1.9px; font-weight: 700; color: #161616; white-space: nowrap; }
.feature ul { margin-top: 52px; display: grid; gap: 40px; }
.feature li { display: flex; align-items: center; gap: 35px; letter-spacing: 1.17px; white-space: nowrap; }
.feature b { letter-spacing: 1.5px; }
.loose { letter-spacing: 1.6px; }
.check { flex: none; width: 35px; height: 24px; margin: 9px 0 0 6px; fill: none; stroke: #27a658; stroke-width: 3.6px; }
```
